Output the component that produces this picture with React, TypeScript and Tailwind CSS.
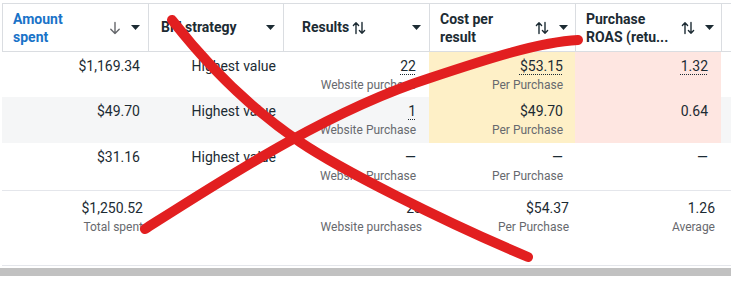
import React from "react";

const ink = "text-[#1c2b33]";

function Caret() {
  return (
    <svg width="9" height="5" viewBox="0 0 9 5" className="shrink-0">
      <polygon points="0,0 9,0 4.5,5" fill="#1c2b33" />
    </svg>
  );
}

function DownArrow() {
  return (
    <svg width="12" height="14" viewBox="0 0 12 14" className="shrink-0">
      <path d="M6 1.5V12.5M1.8 8.3L6 12.5L10.2 8.3" stroke="#65676b" strokeWidth="1.4" fill="none" strokeLinecap="round" strokeLinejoin="round" />
    </svg>
  );
}

function SortArrows() {
  return (
    <svg width="14" height="14" viewBox="0 0 14 14" className="shrink-0">
      <path
        d="M4 12.5V1.8M1.4 4.4L4 1.8L6.6 4.4M10 1.5V12.2M7.4 9.6L10 12.2L12.6 9.6"
        stroke="#1c2b33"
        strokeWidth="1.4"
        fill="none"
        strokeLinecap="round"
        strokeLinejoin="round"
      />
    </svg>
  );
}

function Dotted({ children }: { children: React.ReactNode }) {
  return <span className="underline decoration-dotted decoration-1 underline-offset-[3px]">{children}</span>;
}

function Cell({
  main,
  sub,
  bg = "",
  pr = "pr-3",
}: {
  main: React.ReactNode;
  sub?: string;
  bg?: string;
  pr?: string;
}) {
  return (
    <div className={`flex flex-col items-end pt-[4px] ${pr} ${bg} overflow-hidden whitespace-nowrap`}>
      <span className={`text-[14px] leading-[20px] ${ink}`}>{main}</span>
      {sub && <span className="text-[12px] leading-[18px] text-[#67696e]">{sub}</span>}
    </div>
  );
}

const cols = "grid grid-cols-[146px_135px_146px_146px_146px_10px]";

const rows = [
  {
    spent: "$1,169.34",
    results: <Dotted>22</Dotted>,
    resultsSub: "Website purchase",
    cost: <Dotted>$53.15</Dotted>,
    roas: <Dotted>1.32</Dotted>,
    stripe: false,
    h: "h-[45px]",
    tint: true,
  },
  {
    spent: "$49.70",
    results: <Dotted>1</Dotted>,
    resultsSub: "Website Purchase",
    cost: "$49.70",
    roas: "0.64",
    stripe: true,
    h: "h-[46px]",
    tint: true,
  },
  {
    spent: "$31.16",
    results: "—",
    resultsSub: "Website Purchase",
    cost: "—",
    roas: "—",
    stripe: false,
    h: "h-[47px]",
    tint: false,
  },
];

export default function App() {
  return (
    <div
      className="relative w-[731px] h-[281px] overflow-hidden bg-white pt-[3px] pl-[2px]"
      style={{ fontFamily: "Roboto, 'Noto Sans', sans-serif" }}
    >
      {/* Header */}
      <div className={`${cols} h-[49px] border-y border-[#dadde1] border-l`}>
        <div className="flex items-center pl-[10px] pr-2 border-r border-[#dadde1]">
          <div className="flex-1 text-[14px] leading-[18px] font-bold text-[#1a73c8]">
            Amount
            <br />
            spent
          </div>
          <div className="flex items-center gap-[10px]">
            <DownArrow />
            <Caret />
          </div>
        </div>
        <div className="flex items-center pl-3 pr-2 border-r border-[#dadde1]">
          <div className={`flex-1 text-[14px] font-bold ${ink}`}>Bid strategy</div>
          <Caret />
        </div>
        <div className="flex items-center pl-[18px] pr-2 border-r border-[#dadde1]">
          <div className={`flex-1 flex items-center gap-[3px] text-[14px] font-bold ${ink}`}>
            Results <SortArrows />
          </div>
          <Caret />
        </div>
        <div className="flex items-center pl-[10px] pr-[7px] border-r border-[#dadde1]">
          <div className={`flex-1 text-[14px] leading-[18px] font-bold ${ink}`}>
            Cost per
            <br />
            result
          </div>
          <div className="flex items-center gap-[10px]">
            <SortArrows />
            <Caret />
          </div>
        </div>
        <div className="flex items-center pl-[10px] pr-[7px] border-r border-[#dadde1]">
          <div className={`flex-1 text-[14px] leading-[18px] font-bold ${ink} whitespace-nowrap`}>
            Purchase
            <br />
            ROAS (retu...
          </div>
          <div className="flex items-center gap-[10px]">
            <SortArrows />
            <Caret />
          </div>
        </div>
        <div />
      </div>

      {/* Body rows */}
      {rows.map((r, i) => (
        <div key={i} className={`${cols} ${r.h} ${r.stripe ? "bg-[#f5f6f7]" : "bg-white"}`}>
          <Cell main={r.spent} pr="pr-2" />
          <Cell main="Highest value" pr="pr-[7px]" />
          <Cell main={r.results} sub={r.resultsSub} pr="pr-[13px]" />
          <Cell main={r.cost} sub="Per Purchase" bg={r.tint ? "bg-[#fef0c7]" : ""} pr="pr-3" />
          <Cell main={r.roas} bg={r.tint ? "bg-[#fee6e1]" : ""} pr="pr-[13px]" />
          <div />
        </div>
      ))}

      {/* Totals */}
      <div className={`${cols} h-[76px] border-y border-[#e4e6eb] pt-[3px]`}>
        <Cell main="$1,250.52" sub="Total spent" pr="pr-[5px]" />
        <div />
        <Cell main="23" sub="Website purchases" pr="pr-[7px]" />
        <Cell main="$54.37" sub="Per Purchase" pr="pr-[6px]" />
        <Cell main="1.26" sub="Average" pr="pr-[6px]" />
        <div />
      </div>

      {/* Horizontal scrollbar */}
      <div className="mt-[2px] -ml-[2px] h-[8px] bg-[#c1c1c1]" />

      {/* Red hand-drawn cross over the table */}
      <svg
        className="absolute left-0 top-0 pointer-events-none"
        width="731"
        height="281"
        viewBox="0 0 731 281"
      >
        <path
          d="M172 20 C215 75 260 115 300 142 S440 220 528 257"
          stroke="#e21f20"
          strokeWidth="10"
          fill="none"
          strokeLinecap="round"
        />
        <path
          d="M145 229 C230 175 330 110 430 78 C490 58 540 42 578 40"
          stroke="#e21f20"
          strokeWidth="10"
          fill="none"
          strokeLinecap="round"
        />
      </svg>
    </div>
  );
}
